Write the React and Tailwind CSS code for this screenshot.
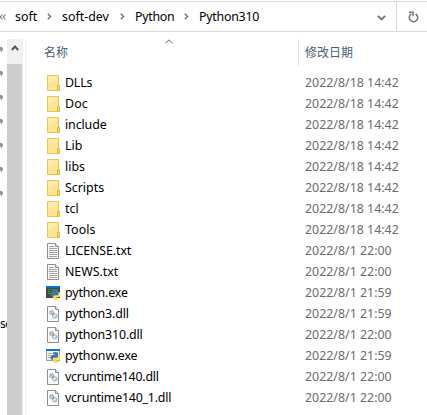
const FONT = "font-['Noto_Sans','Noto_Sans_CJK_SC',sans-serif]";

const rows = [
  ['folder', 'DLLs', '2022/8/18 14:42', 'tracking-[-0.2px]'],
  ['folder', 'Doc', '2022/8/18 14:42', 'tracking-[0.1px]'],
  ['folder', 'include', '2022/8/18 14:42', 'tracking-[-0.1px]'],
  ['folder', 'Lib', '2022/8/18 14:42', 'tracking-[0px]'],
  ['folder', 'libs', '2022/8/18 14:42', 'tracking-[0px]'],
  ['folder', 'Scripts', '2022/8/18 14:42', 'tracking-[0px]'],
  ['folder', 'tcl', '2022/8/18 14:42', 'tracking-[0px]'],
  ['folder', 'Tools', '2022/8/18 14:42', 'tracking-[0.1px]'],
  ['text', 'LICENSE.txt', '2022/8/1 22:00', 'tracking-[-0.1px]'],
  ['text', 'NEWS.txt', '2022/8/1 22:00', 'tracking-[-0.05px]'],
  ['python', 'python.exe', '2022/8/1 21:59', 'tracking-[-0.15px]'],
  ['dll', 'python3.dll', '2022/8/1 21:59', 'tracking-[-0.15px]'],
  ['dll', 'python310.dll', '2022/8/1 22:00', 'tracking-[-0.15px]'],
  ['pythonw', 'pythonw.exe', '2022/8/1 21:59', 'tracking-[-0.1px]'],
  ['dll', 'vcruntime140.dll', '2022/8/1 22:00', 'tracking-[-0.24px]'],
  ['dll', 'vcruntime140_1.dll', '2022/8/1 22:00', 'tracking-[-0.22px]'],
];

function Page({ children }) {
  return (
    <>
      <path d="M1.5 .5h8l3 3v12h-11z" fill="#fafafa" stroke="#8f8f8f" />
      <path d="M9.5 .5v3h3" fill="#e2e2e2" stroke="#8f8f8f" />
      {children}
    </>
  );
}

function Snakes() {
  return (
    <>
      <path d="M7 4.500Q9.500 3.300 12 4.500V8.500Q12 9.800 10.700 9.800H8Q6.800 9.800 6.800 11V12H6Q4.500 11.500 4.500 9.500T6 7H9V6.500H7Z" fill="#3b78ad" />
      <path d="M12.300 7H13.200Q14.500 7.500 14.500 9.500T13.200 12H10V12.500H12.300V14.200Q9.800 15.600 7.200 14.200V11.300Q7.200 10.200 8.300 10.200H11Q12.300 10.200 12.300 9Z" fill="#ffdc55" />
    </>
  );
}

function FileIcon({ kind }) {
  return (
    <svg className="block h-4 w-[15px] shrink-0" viewBox="0 0 15 16">
      {kind === 'folder' && (
        <>
          <path d="M1.500.5h11v15h-11z" fill="#ffe492" stroke="#eac54b" />
          <path d="M2 1h10v3L2 8z" fill="#ffeaa6" />
          <path d="M11.500 10.500h2v5h-2z" fill="#f8d775" stroke="#dfb83c" />
        </>
      )}
      {kind === 'text' && (
        <Page>
          <path d="M3 3.500h5M3 5.500h8M3 7.500h8M3 9.500h8M3 11.500h8M3 13.500h8" stroke="#a4a4a4" />
        </Page>
      )}
      {kind === 'dll' && (
        <Page>
          <circle cx="5.700" cy="6.700" r="1.900" fill="#dce3e7" stroke="#8b979e" strokeWidth="1.200" strokeDasharray="1 .4" />
          <circle cx="8.700" cy="9.800" r="2.100" fill="#d7e9f5" stroke="#8fb3c9" strokeWidth="1.300" strokeDasharray="1 .4" />
          <path d="m4.300 5.300 6 6" stroke="#8d9ba4" strokeWidth=".7" />
          <circle cx="8.700" cy="9.800" r=".8" fill="#fff" />
        </Page>
      )}
      {kind === 'python' && (
        <>
          <path d="M0 1h14v12H0z" fill="#40484c" />
          <path d="M0 1h14v2H0z" fill="#0873c9" />
          <path d="M2 4.500h2m1 0h3M2 6.500h3m1 0h2M2 8.500h3" stroke="#2ba63a" />
          <Snakes />
        </>
      )}
      {kind === 'pythonw' && (
        <>
          <path d="M.5 1.500h13v11H.5z" fill="#f2f2f2" stroke="#929da5" />
          <path d="M0 1h14v2H0z" fill="#0878d1" />
          <path d="M2 5.500h4M2 7.500h3M2 9.500h3" stroke="#a7acb0" />
          <Snakes />
        </>
      )}
    </svg>
  );
}

function Crumb({ children, className }) {
  return <span className={`shrink-0 ${className}`}>{children}</span>;
}

function Chevron() {
  return (
    <svg className="mt-px block h-[7px] w-[5px] shrink-0" viewBox="0 0 5 7" fill="none">
      <path d="M.8 .8 3.500 3.500.8 6.200" stroke="#777" strokeWidth="1.500" />
    </svg>
  );
}

export default function App() {
  return (
    <div className={`flex h-[415px] w-[427px] flex-col overflow-hidden bg-white text-[12.400px] leading-[21px] text-black ${FONT}`}>
      <header className="mt-px flex h-[31px] shrink-0 border-y border-[#d9d9d9]">
        <div className="flex w-[396px] shrink-0 items-center pb-px">
          <svg className="mt-px block h-[6px] w-[6px] shrink-0" viewBox="0 0 6 6" fill="none">
            <path d="M2.500 .5 .3 3l2.200 2.500M5.500 .5 3.300 3l2.200 2.500" stroke="#777" strokeWidth="1.100" />
          </svg>
          <Crumb className="ml-[9px] w-8">soft</Crumb>
          <Chevron />
          <Crumb className="ml-[10px] w-[58px]">soft-dev</Crumb>
          <Chevron />
          <Crumb className="ml-[10px] w-[49px] tracking-[-0.3px]">Python</Crumb>
          <Chevron />
          <Crumb className="ml-[10px] tracking-[-0.25px]">Python310</Crumb>
          <svg className="mt-[3px] mr-[10px] ml-auto block h-[6px] w-[9px]" viewBox="0 0 9 6" fill="none">
            <path d="m.8.8 3.700 3.700L8.200.8" stroke="#737373" strokeWidth="1.800" />
          </svg>
        </div>
        <div className="flex grow items-center border-l border-[#d9d9d9] pl-[11px]">
          <svg className="block h-3 w-[11px]" viewBox="0 0 11 12" fill="none">
            <path d="M3.300 3A4.200 4.200 0 1 0 7.700 3M1 1.200h4v4" stroke="#777" strokeWidth="1.500" />
          </svg>
        </div>
      </header>
      <main className="flex min-h-0 grow pt-[7px]">
        <aside className="flex w-[7px] shrink-0 flex-col overflow-hidden pt-[7px]">
          {[0, 1, 2, 3, 4, 5, 6].map((n) => (
            <svg key={n} className="mb-[17px] block h-[7px] w-[4px] shrink-0" viewBox="0 0 4 7">
              <path d="M0 1h1V0l2 2.500v1L1 7V5H0z" fill="#8e9aa3" />
            </svg>
          ))}
          <span className="mt-[99px] block w-[7px] overflow-hidden whitespace-nowrap tracking-[-0.8px]">sc</span>
        </aside>
        <div className="w-[16px] shrink-0 bg-[#f0f0f0]">
          <div className="flex h-[25px] justify-center pt-[6px]">
            <svg className="block h-[6px] w-2" viewBox="0 0 8 6" fill="none">
              <path d="M.8 5 4 1.500 7.200 5" stroke="#555" strokeWidth="1.900" />
            </svg>
          </div>
          <div className="h-[351px] w-[15px] bg-[#cdcdcd]" />
        </div>
        <section className="ml-[2px] flex grow flex-col border-l border-[#f0f0f0]">
          <div className="flex h-[33px] shrink-0 text-[12px] text-[#4c607a]">
            <div className="flex w-[272px] pl-[18px]">
              <span className="pt-[3px]">名称</span>
              <svg className="ml-[97px] block h-[5px] w-2" viewBox="0 0 8 5" fill="none">
                <path d="M.5 4.300 4 .8l3.500 3.500" stroke="#666" />
              </svg>
            </div>
            <div className="h-[27px] border-l border-[#e2e2e2] pt-[3px] pl-[6px]">修改日期</div>
          </div>
          {rows.map(([kind, name, date, tracking]) => (
            <div key={name} className="flex h-[21px] shrink-0 items-center pl-[20px]">
              <FileIcon kind={kind} />
              <span className={`ml-[4px] w-[240px] shrink-0 whitespace-pre ${tracking}`}>{name}</span>
              <span className="whitespace-pre text-[#6d6d6d]">{date}</span>
            </div>
          ))}
        </section>
      </main>
    </div>
  );
}
